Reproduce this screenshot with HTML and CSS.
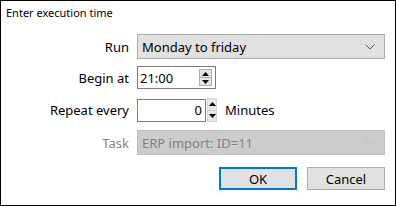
FILE: index.html
```html
<!DOCTYPE html>
<html lang="en">
<head>
    <meta charset="UTF-8">
    <title>Enter execution time</title>
    <link rel="stylesheet" href="styles.css">
</head>
<body>
    <div class="dialog">
        <div class="title">Enter execution time</div>

        <div class="row row-run">
            <label class="label">Run</label>
            <div class="combo">
                <span>Monday to friday</span>
                <svg class="chevron" width="10" height="6" viewBox="0 0 10 6"><path d="M0.5 0.5 L5 5 L9.5 0.5" fill="none" stroke="#606060" stroke-width="1"/></svg>
            </div>
        </div>

        <div class="row row-begin">
            <label class="label">Begin at</label>
            <div class="timebox">
                <span class="timevalue">21:00</span>
                <div class="spin inner">
                    <div class="spin-btn"><svg width="7" height="4" viewBox="0 0 7 4"><path d="M3.5 0 L7 4 L0 4 Z" fill="#000"/></svg></div>
                    <div class="spin-btn"><svg width="7" height="4" viewBox="0 0 7 4"><path d="M0 0 L7 0 L3.5 4 Z" fill="#000"/></svg></div>
                </div>
            </div>
        </div>

        <div class="row row-repeat">
            <label class="label">Repeat every</label>
            <div class="numbox">0</div>
            <div class="spin outer">
                <div class="spin-btn"><svg width="7" height="4" viewBox="0 0 7 4"><path d="M3.5 0 L7 4 L0 4 Z" fill="#000"/></svg></div>
                <div class="spin-btn"><svg width="7" height="4" viewBox="0 0 7 4"><path d="M0 0 L7 0 L3.5 4 Z" fill="#000"/></svg></div>
            </div>
            <span class="unit">Minutes</span>
        </div>

        <div class="row row-task">
            <label class="label disabled">Task</label>
            <div class="combo disabled">
                <span>ERP import: ID=11</span>
                <svg class="chevron" width="10" height="6" viewBox="0 0 10 6"><path d="M0.5 0.5 L5 5 L9.5 0.5" fill="none" stroke="#bcbcbc" stroke-width="1"/></svg>
            </div>
        </div>

        <div class="buttons">
            <button class="btn default">OK</button>
            <button class="btn">Cancel</button>
        </div>
    </div>
</body>
</html>
```

FILE: styles.css
```css
body {
    margin: 0;
    background-color: white;
    font-family: 'Noto Sans', 'Open Sans', sans-serif;
    font-size: 13px;
    color: #000;
}
.dialog {
    width: 394px;
    height: 204px;
    border: 1px solid #000;
    background-color: white;
}
.title {
    padding: 4px 0 0 5px;
    height: 29px;
    box-sizing: border-box;
    line-height: 16px;
    font-size: 11px;
}
.row {
    display: flex;
    align-items: center;
}
.label {
    width: 128px;
    text-align: right;
    padding-right: 8px;
    flex: none;
}
.label.disabled {
    color: #838383;
}
.row-run {
    height: 25px;
    margin-top: 4px;
}
.row-begin {
    height: 23px;
    margin-top: 7px;
}
.row-repeat {
    height: 24px;
    margin-top: 9px;
}
.row-task {
    height: 25px;
    margin-top: 8px;
}
.combo {
    width: 248px;
    height: 25px;
    box-sizing: border-box;
    border: 1px solid #adadad;
    background-color: #e1e1e1;
    display: flex;
    align-items: center;
    justify-content: space-between;
    padding: 0 9px 0 4px;
}
.combo.disabled {
    background-color: #cccccc;
    border-color: #bfbfbf;
    color: #838383;
}
.timebox {
    width: 79px;
    height: 23px;
    box-sizing: border-box;
    border: 1px solid #7a7a7a;
    display: flex;
    align-items: center;
    justify-content: space-between;
    padding: 0 3px 0 2px;
}
.spin {
    display: flex;
    flex-direction: column;
}
.spin.inner {
    height: 17px;
    width: 13px;
    border: 1px solid #adadad;
    box-sizing: border-box;
}
.spin-btn {
    flex: 1;
    background-color: #e6e6e6;
    display: flex;
    align-items: center;
    justify-content: center;
}
.spin.inner .spin-btn + .spin-btn {
    border-top: 1px solid #adadad;
}
.numbox {
    width: 69px;
    height: 23px;
    box-sizing: border-box;
    border: 1px solid #7a7a7a;
    text-align: right;
    padding-right: 3px;
    line-height: 21px;
    margin-top: 1px;
}
.spin.outer {
    width: 10px;
    height: 24px;
    margin-left: 1px;
    border: 1px solid #d4d4d4;
    box-sizing: border-box;
}
.spin.outer .spin-btn + .spin-btn {
    border-top: 1px solid #d4d4d4;
}
.unit {
    margin-left: 8px;
}
.buttons {
    display: flex;
    justify-content: flex-end;
    gap: 10px;
    margin-top: 12px;
    padding-right: 10px;
}
.btn {
    width: 78px;
    height: 23px;
    box-sizing: border-box;
    border: 1px solid #adadad;
    background-color: #e1e1e1;
    font-family: inherit;
    font-size: 13px;
    color: #000;
    padding: 0;
}
.btn.default {
    border: 2px solid #0078d7;
}
```
